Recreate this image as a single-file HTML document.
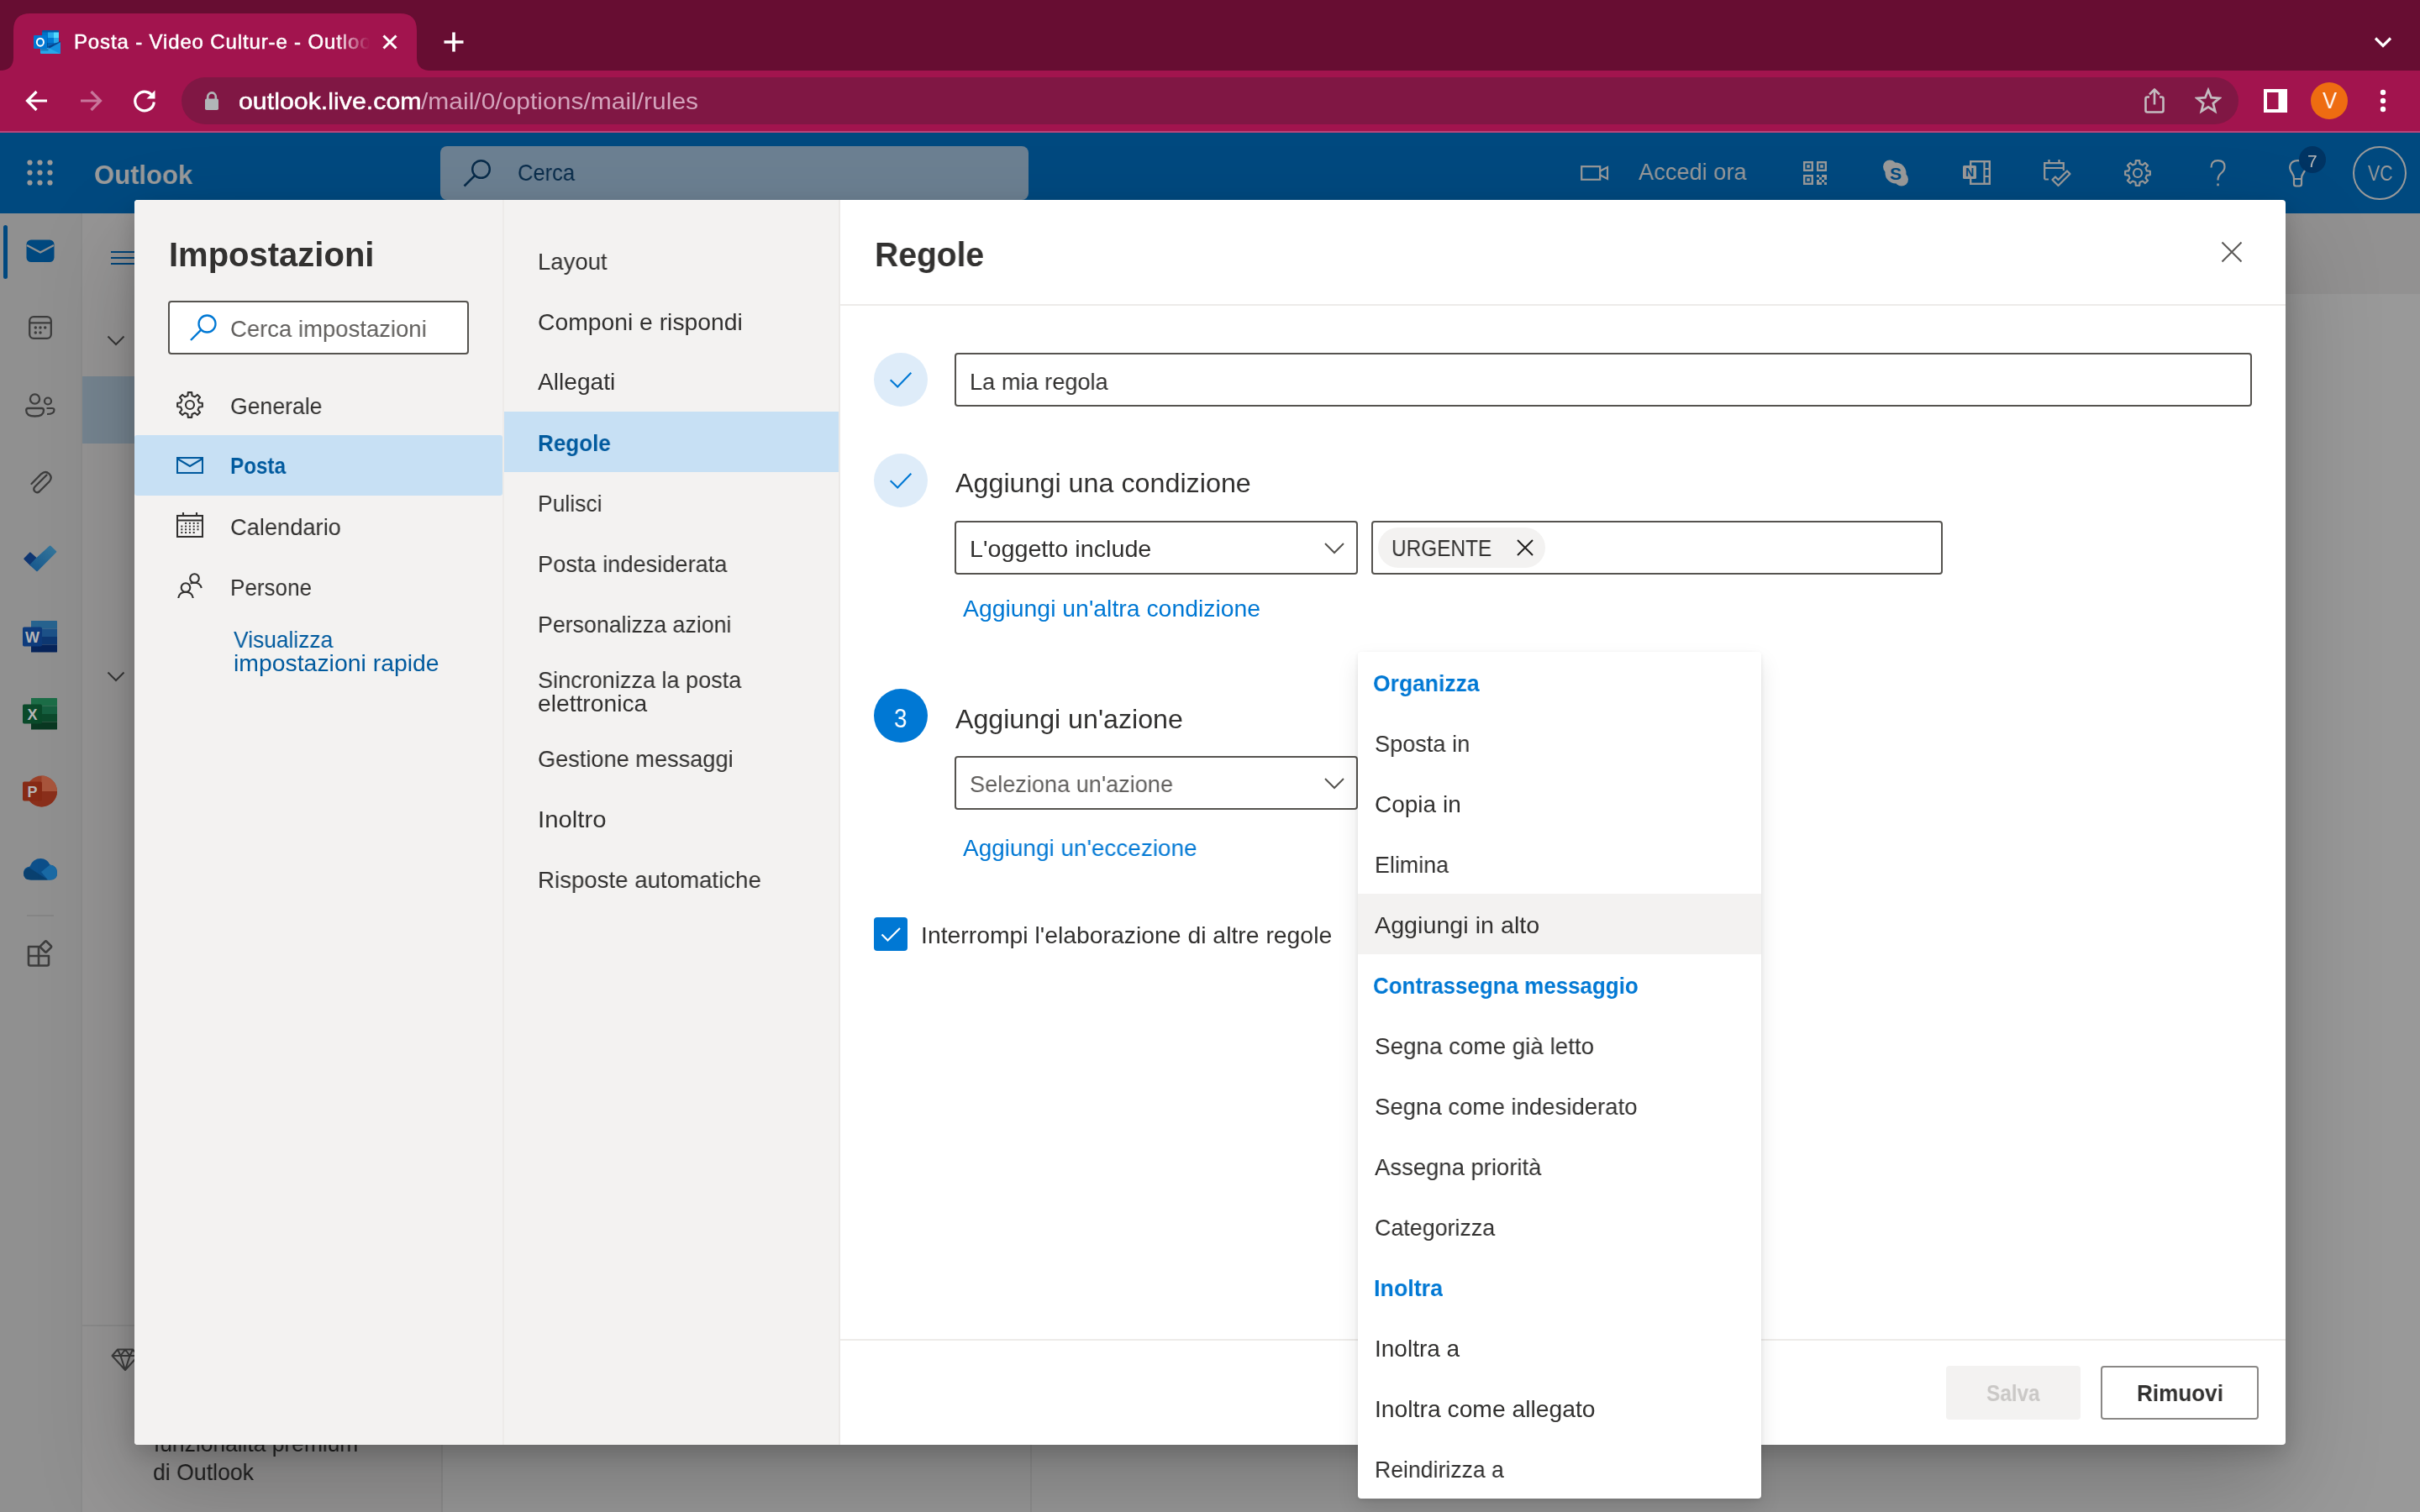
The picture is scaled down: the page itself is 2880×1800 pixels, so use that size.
<!DOCTYPE html>
<html lang="it"><head><meta charset="utf-8"><title>Posta - Video Cultur-e - Outlook</title>
<style>
html,body{margin:0;padding:0;}
body{width:2880px;height:1800px;overflow:hidden;position:relative;background:#989898;font-family:"Liberation Sans",sans-serif;}
.a{position:absolute;display:block;}
.t{position:absolute;white-space:nowrap;line-height:1;font-family:"Liberation Sans",sans-serif;will-change:transform;transform-origin:0 0;}
</style></head><body>
<div class="a" style="left:0px;top:0px;width:2880px;height:84px;background:#670d32;"></div>
<svg class="a" style="left:0px;top:0px;" width="520" height="84" viewBox="0 0 520 84"><path d="M0,84 Q16,84 16,68 L16,36 Q16,16 36,16 L476,16 Q496,16 496,36 L496,68 Q496,84 512,84 Z" fill="#a2144e"/></svg>
<svg class="a" style="left:40px;top:36px;" width="32" height="28" viewBox="0 0 32 28"><path d="M10.1,1 Q10.1,0 11.1,0 L29,0 Q30,0 30,1 L30,21 L10.1,21Z" fill="#0358a7"/><rect x="10.1" y="2.5" width="6.9" height="6.5" fill="#0072c6"/><rect x="17" y="2.5" width="7" height="6.5" fill="#28a8ea"/><rect x="24" y="2.5" width="6" height="6.5" fill="#50d9ff"/><rect x="10.1" y="9" width="6.9" height="6.3" fill="#0364b8"/><rect x="17" y="9" width="7" height="6.3" fill="#0078d4"/><rect x="24" y="9" width="6" height="6.3" fill="#28a8ea"/><rect x="10.1" y="15.3" width="6.9" height="5.7" fill="#064a8c"/><rect x="17" y="15.3" width="7" height="5.7" fill="#0364b8"/><rect x="24" y="15.3" width="6" height="5.7" fill="#0078d4"/><path d="M8,18.5 L18.5,21.4 L32,22 L32,28 L9,28 Q8,28 8,27Z" fill="#28a8ea"/><path d="M32,13.4 L32,28.05 L18.2,21.3Z" fill="#1490df"/><path d="M17.2,19.6 L31.5,13.1 L32,13.4 L32,14.2 L19.4,21.3Z" fill="#0a2767" opacity="0.6"/><rect x="8.5" y="22" width="9" height="2.5" fill="#0a5a9a" opacity="0.55"/><rect x="0" y="6" width="16.1" height="16" rx="1.2" fill="#0078d4"/><ellipse cx="7.9" cy="14.2" rx="4.05" ry="4.5" fill="none" stroke="#fff" stroke-width="1.95"/></svg>
<div class="t" style="left:88.00px;top:37.98px;font-size:24px;color:#fff;letter-spacing:0.860px;-webkit-text-stroke:0.5px #fff;width:356px;overflow:hidden;-webkit-mask-image:linear-gradient(to right,#000 0,#000 312px,transparent 352px);mask-image:linear-gradient(to right,#000 0,#000 312px,transparent 352px);">Posta - Video Cultur-e - Outlook</div>
<svg class="a" style="left:452px;top:38px;" width="24" height="24" viewBox="0 0 24 24"><path d="M4.5,4.5 L19.5,19.5 M19.5,4.5 L4.5,19.5" stroke="#fff" stroke-width="3" fill="none"/></svg>
<svg class="a" style="left:526px;top:36px;" width="28" height="28" viewBox="0 0 28 28"><path d="M14,2.5 L14,25.5 M2.5,14 L25.5,14" stroke="#fff" stroke-width="3.6" fill="none"/></svg>
<svg class="a" style="left:2822px;top:40px;" width="28" height="20" viewBox="0 0 28 20"><path d="M5,5.5 L14,14.5 L23,5.5" stroke="#fff" stroke-width="3.2" fill="none"/></svg>
<div class="a" style="left:0px;top:84px;width:2880px;height:72px;background:#a2144e;"></div>
<div class="a" style="left:0px;top:156px;width:2880px;height:2px;background:#b9457b;"></div>
<svg class="a" style="left:28px;top:104px;" width="32" height="32" viewBox="0 0 32 32"><path d="M28,16 L5,16 M15.5,5 L4.5,16 L15.5,27" stroke="#fff" stroke-width="3.2" fill="none" stroke-linejoin="miter"/></svg>
<svg class="a" style="left:92px;top:104px;" width="32" height="32" viewBox="0 0 32 32"><path d="M4,16 L27,16 M16.5,5 L27.5,16 L16.5,27" stroke="#c8769b" stroke-width="3.2" fill="none"/></svg>
<svg class="a" style="left:156px;top:104px;" width="32" height="32" viewBox="0 0 32 32"><path d="M26.2,11.5 A11.3,11.3 0 1 0 27.3,17.5" stroke="#fff" stroke-width="3.2" fill="none"/><path d="M28.5,3.5 L28.5,13.5 L18.5,13.5 Z" fill="#fff"/></svg>
<div class="a" style="left:216px;top:92px;width:2448px;height:56px;background:#801744;border-radius:28px;"></div>
<svg class="a" style="left:242px;top:108px;" width="20" height="26" viewBox="0 0 20 26"><path d="M5.2,10 L5.2,7.2 A4.8,4.8 0 0 1 14.8,7.2 L14.8,10" stroke="#b1b5b8" stroke-width="2.6" fill="none"/><rect x="2" y="9.5" width="16" height="13.5" rx="1.8" fill="#b1b5b8"/></svg>
<div class="t" style="left:284.42px;top:107.30px;font-size:28px;color:#fff;transform:scaleX(1.0835);-webkit-text-stroke:0.5px #fff;">outlook.live.com</div>
<div class="t" style="left:501.00px;top:107.30px;font-size:28px;color:#d3a3bb;transform:scaleX(1.0712);">/mail/0/options/mail/rules</div>
<svg class="a" style="left:2550px;top:102px;" width="28" height="36" viewBox="0 0 28 36"><path d="M8,13.5 L5.5,13.5 Q3.5,13.5 3.5,15.5 L3.5,29.5 Q3.5,31.5 5.5,31.5 L22.5,31.5 Q24.5,31.5 24.5,29.5 L24.5,15.5 Q24.5,13.5 22.5,13.5 L20,13.5 M14,22.5 L14,5 M8,10.5 L14,4.5 L20,10.5" stroke="#c4bcc0" stroke-width="2.6" fill="none" stroke-linejoin="round"/></svg>
<svg class="a" style="left:2612px;top:104px;" width="32" height="32" viewBox="0 0 32 32"><path d="M16,3.2 L19.6,12.2 L29.3,12.9 L21.8,19.1 L24.2,28.5 L16,23.3 L7.8,28.5 L10.2,19.1 L2.7,12.9 L12.4,12.2 Z" stroke="#c4bcc0" stroke-width="2.7" fill="none" stroke-linejoin="miter"/></svg>
<svg class="a" style="left:2694px;top:106px;" width="28" height="28" viewBox="0 0 28 28"><rect x="0" y="0" width="28" height="28" fill="#fff"/><rect x="4" y="4" width="13.5" height="20" fill="#a2144e"/></svg>
<div class="a" style="left:2750px;top:98px;width:44px;height:44px;background:#ee6c11;border-radius:50%;"></div>
<div class="t" style="left:2763.50px;top:107.44px;font-size:27px;color:#fff;transform:scaleX(0.9444);">V</div>
<svg class="a" style="left:2828px;top:104px;" width="16" height="32" viewBox="0 0 16 32"><circle cx="8" cy="6" r="3.2" fill="#fff"/><circle cx="8" cy="16" r="3.2" fill="#fff"/><circle cx="8" cy="26" r="3.2" fill="#fff"/></svg>
<div class="a" style="left:0px;top:158px;width:2880px;height:96px;background:#00497f;"></div>
<svg class="a" style="left:32px;top:190px;" width="31" height="31" viewBox="0 0 31 31"><circle cx="3.5" cy="3.5" r="3.1" fill="#9a9a9a"/><circle cx="3.5" cy="15.5" r="3.1" fill="#9a9a9a"/><circle cx="3.5" cy="27.5" r="3.1" fill="#9a9a9a"/><circle cx="15.5" cy="3.5" r="3.1" fill="#9a9a9a"/><circle cx="15.5" cy="15.5" r="3.1" fill="#9a9a9a"/><circle cx="15.5" cy="27.5" r="3.1" fill="#9a9a9a"/><circle cx="27.5" cy="3.5" r="3.1" fill="#9a9a9a"/><circle cx="27.5" cy="15.5" r="3.1" fill="#9a9a9a"/><circle cx="27.5" cy="27.5" r="3.1" fill="#9a9a9a"/></svg>
<div class="t" style="left:112.03px;top:192.21px;font-size:32px;color:#9a9a9a;transform:scaleX(0.9702);font-weight:700;">Outlook</div>
<div class="a" style="left:524px;top:174px;width:700px;height:64px;background:#6c8092;border-radius:8px;"></div>
<svg class="a" style="left:550px;top:188px;" width="36" height="36" viewBox="0 0 36 36"><circle cx="22.5" cy="13.5" r="10.3" stroke="#082b4a" stroke-width="2.4" fill="none"/><path d="M15.2,20.8 L2.5,33.5" stroke="#082b4a" stroke-width="2.6" fill="none"/></svg>
<div class="t" style="left:616.29px;top:192.40px;font-size:28px;color:#082b4a;transform:scaleX(0.9121);">Cerca</div>
<svg class="a" style="left:1880px;top:194px;" width="36" height="24" viewBox="0 0 36 24"><rect x="2.2" y="4.2" width="22" height="15.6" stroke="#9a9a9a" stroke-width="2.2" fill="none"/><path d="M24.5,9.5 L33,5 L33,19 L24.5,14.5" stroke="#9a9a9a" stroke-width="2.2" fill="none"/></svg>
<div class="t" style="left:1950.00px;top:191.30px;font-size:28px;color:#9a9a9a;transform:scaleX(0.9720);">Accedi ora</div>
<svg class="a" style="left:2146px;top:192px;" width="28" height="28" viewBox="0 0 28 28"><rect x="1.2" y="1.2" width="9.6" height="9.6" stroke="#9a9a9a" stroke-width="2.4" fill="none"/><rect x="4.2" y="4.2" width="3.6" height="3.6" fill="#9a9a9a"/><rect x="17.2" y="1.2" width="9.6" height="9.6" stroke="#9a9a9a" stroke-width="2.4" fill="none"/><rect x="20.2" y="4.2" width="3.6" height="3.6" fill="#9a9a9a"/><rect x="1.2" y="17.2" width="9.6" height="9.6" stroke="#9a9a9a" stroke-width="2.4" fill="none"/><rect x="4.2" y="20.2" width="3.6" height="3.6" fill="#9a9a9a"/><rect x="16" y="16" width="3" height="3" fill="#9a9a9a"/><rect x="22" y="16" width="3" height="3" fill="#9a9a9a"/><rect x="19" y="19" width="3" height="3" fill="#9a9a9a"/><rect x="25" y="19" width="3" height="3" fill="#9a9a9a"/><rect x="16" y="22" width="3" height="3" fill="#9a9a9a"/><rect x="22" y="22" width="3" height="3" fill="#9a9a9a"/><rect x="19" y="25" width="3" height="3" fill="#9a9a9a"/><rect x="25" y="25" width="3" height="3" fill="#9a9a9a"/><rect x="25" y="16" width="3" height="3" fill="#9a9a9a"/><rect x="16" y="25" width="3" height="3" fill="#9a9a9a"/></svg>
<svg class="a" style="left:2239px;top:189px;" width="34" height="34" viewBox="0 0 34 34"><circle cx="17" cy="17" r="12.5" fill="#9a9a9a"/><circle cx="10" cy="9.5" r="8" fill="#9a9a9a"/><circle cx="24" cy="24.5" r="8" fill="#9a9a9a"/><text x="17" y="24.6" font-family='"Liberation Sans", sans-serif' font-weight="700" font-size="21" text-anchor="middle" fill="#00497f">S</text></svg>
<svg class="a" style="left:2336px;top:191px;" width="34" height="30" viewBox="0 0 34 30"><rect x="9.2" y="1.2" width="22.6" height="26.6" stroke="#9a9a9a" stroke-width="2.4" fill="none"/><path d="M25.5,1 L25.5,28 M25.5,10 L32,10 M25.5,19 L32,19" stroke="#9a9a9a" stroke-width="2.2" fill="none"/><rect x="0" y="6" width="16" height="16" rx="1.5" fill="#9a9a9a"/><text x="8" y="19.2" font-family='"Liberation Sans", sans-serif' font-weight="700" font-size="14" text-anchor="middle" fill="#00497f">N</text></svg>
<svg class="a" style="left:2430px;top:189px;" width="36" height="34" viewBox="0 0 36 34"><path d="M3.2,24.5 L3.2,5.2 L25.8,5.2 L25.8,14 M3.2,11 L25.8,11 M8.5,1 L8.5,6 M20.5,1 L20.5,6 M3.2,24.5 L8,24.5" stroke="#9a9a9a" stroke-width="2.2" fill="none"/><path d="M12.5,25 L16,21.5 L19.5,25 L30,14.5 L33.5,18 L19.5,32 Z" stroke="#9a9a9a" stroke-width="2.2" fill="none" stroke-linejoin="round"/></svg>
<svg class="a" style="left:2528px;top:190px;" width="32" height="32" viewBox="0 0 32 32"><path d="M30.83,13.77 L30.83,18.23 L26.91,18.53 L25.50,21.93 L28.07,24.91 L24.91,28.07 L21.93,25.50 L18.53,26.91 L18.23,30.83 L13.77,30.83 L13.47,26.91 L10.07,25.50 L7.09,28.07 L3.93,24.91 L6.50,21.93 L5.09,18.53 L1.17,18.23 L1.17,13.77 L5.09,13.47 L6.50,10.07 L3.93,7.09 L7.09,3.93 L10.07,6.50 L13.47,5.09 L13.77,1.17 L18.23,1.17 L18.53,5.09 L21.93,6.50 L24.91,3.93 L28.07,7.09 L25.50,10.07 L26.91,13.47Z" stroke="#9a9a9a" stroke-width="2.2" fill="none" stroke-linejoin="round"/><circle cx="16" cy="16" r="5" stroke="#9a9a9a" stroke-width="2.2" fill="none"/></svg>
<svg class="a" style="left:2628px;top:189px;" width="24" height="34" viewBox="0 0 24 34"><path d="M3.5,10.5 Q3.5,2.2 11.5,2.2 Q19.5,2.2 19.5,9.5 Q19.5,14 15,17.5 Q11.5,20.5 11.5,25.5" stroke="#9a9a9a" stroke-width="2.2" fill="none"/><rect x="10.3" y="29.5" width="2.5" height="2.8" fill="#9a9a9a"/></svg>
<svg class="a" style="left:2722px;top:189px;" width="26" height="34" viewBox="0 0 26 34"><path d="M8,24 Q8,20 5.5,16.5 Q2.2,12 3.6,7.5 Q5.5,2.2 12.5,2.2 Q19.5,2.2 21.4,7.5 Q22.8,12 19.5,16.5 Q17,20 17,24 Z M8,24 L8,30 Q8,32.5 10.5,32.5 L14.5,32.5 Q17,32.5 17,30 L17,24" stroke="#9a9a9a" stroke-width="2.2" fill="none"/></svg>
<div class="a" style="left:2736px;top:174px;width:32px;height:32px;background:#003463;border-radius:50%;"></div>
<div class="t" style="left:2745.95px;top:181.87px;font-size:20px;color:#b8b8b8;transform:scaleX(1.0500);">7</div>
<div class="a" style="left:2800px;top:174px;width:64px;height:64px;border:2px solid #9a9a9a;border-radius:50%;box-sizing:border-box;"></div>
<div class="t" style="left:2817.50px;top:193.84px;font-size:25px;color:#9a9a9a;transform:scaleX(0.8508);">VC</div>
<div class="a" style="left:0px;top:254px;width:96px;height:1546px;background:#909090;"></div>
<div class="a" style="left:96px;top:254px;width:1.5px;height:1546px;background:#8c8c8c;"></div>
<div class="a" style="left:98px;top:254px;width:427px;height:1546px;background:#969595;"></div>
<div class="a" style="left:525px;top:254px;width:2px;height:1546px;background:#8d8d8d;"></div>
<div class="a" style="left:527px;top:254px;width:2353px;height:1546px;background:#999999;"></div>
<div class="a" style="left:527px;top:254px;width:2353px;height:96px;background:#929191;"></div>
<div class="a" style="left:1226px;top:350px;width:2px;height:1450px;background:#8f8f8f;"></div>
<div class="a" style="left:98px;top:1577px;width:427px;height:2px;background:#8b8b8b;"></div>
<div class="a" style="left:4px;top:268px;width:4.5px;height:64px;background:#00487f;border-radius:3px;"></div>
<svg class="a" style="left:31px;top:285px;" width="34" height="28" viewBox="0 0 34 28"><rect x="0.5" y="0.5" width="33" height="26.5" rx="5.5" fill="#00487f"/><path d="M1,7 L17,15.5 L33,7" stroke="#909090" stroke-width="2.4" fill="none"/></svg>
<svg class="a" style="left:34px;top:376px;" width="28" height="28" viewBox="0 0 28 28"><rect x="1.2" y="1.2" width="25.6" height="25.6" rx="4.8" stroke="#3d3d3d" stroke-width="2.3" fill="none"/><path d="M1.2,8.4 L26.8,8.4" stroke="#3d3d3d" stroke-width="2.2"/><circle cx="8.3" cy="14" r="1.75" fill="#3d3d3d"/><circle cx="14" cy="14" r="1.75" fill="#3d3d3d"/><circle cx="19.7" cy="14" r="1.75" fill="#3d3d3d"/><circle cx="8.3" cy="20" r="1.75" fill="#3d3d3d"/><circle cx="14" cy="20" r="1.75" fill="#3d3d3d"/></svg>
<svg class="a" style="left:30px;top:468px;" width="36" height="30" viewBox="0 0 36 30"><circle cx="11.5" cy="7" r="5.6" stroke="#3d3d3d" stroke-width="2.3" fill="none"/><path d="M3.5,18 L19.5,18 Q22,18 22,20.5 Q22,27.5 11.5,27.5 Q1.2,27.5 1.2,20.5 Q1.2,18 3.5,18Z" stroke="#3d3d3d" stroke-width="2.3" fill="none"/><circle cx="27" cy="9.5" r="4" stroke="#3d3d3d" stroke-width="2.2" fill="none"/><path d="M25.5,18 L32,18 Q34.5,18 34.5,20 Q34.5,25 26,25" stroke="#3d3d3d" stroke-width="2.2" fill="none"/></svg>
<svg class="a" style="left:33px;top:558px;" width="30" height="32" viewBox="0 0 30 32"><path d="M22.5,7.5 L8.5,21.5 Q6,24.5 8.5,27 Q11,29.5 14,27 L25.5,15.5 Q30,10.5 25.5,6 Q21,1.8 16,6.3 L4.5,18" stroke="#3d3d3d" stroke-width="2.3" fill="none" stroke-linecap="round"/></svg>
<svg class="a" style="left:27px;top:648px;" width="42" height="34" viewBox="0 0 42 34"><defs><linearGradient id="tg" x1="0" y1="1" x2="1" y2="0"><stop offset="0" stop-color="#15568c"/><stop offset="1" stop-color="#37789c"/></linearGradient></defs><path d="M2.3,17.2 L8.9,10.4 L16.5,17.2 L9.6,24.5 Z" fill="#0f3672" stroke="#0f3672" stroke-width="2" stroke-linejoin="round"/><path d="M16.5,17.2 L32.6,2.6 L39.3,8.8 L17,31.3 L9.6,24.5 Z" fill="url(#tg)" stroke="url(#tg)" stroke-width="2" stroke-linejoin="round"/></svg>
<svg class="a" style="left:27px;top:739px;border-radius:2px;" width="42" height="38" viewBox="0 0 42 38"><rect x="10" y="0" width="31" height="9.5" fill="#27638f"/><rect x="10" y="9.5" width="31" height="9.5" fill="#1d5288"/><rect x="10" y="19" width="31" height="9.5" fill="#0e3872"/><rect x="10" y="28.5" width="31" height="9" fill="#07245a"/><rect x="0" y="7.5" width="23" height="23" rx="1.8" fill="#0e3b7c"/><text x="11.5" y="26" font-family='"Liberation Sans", sans-serif' font-weight="700" font-size="18" text-anchor="middle" fill="#b5b5b5">W</text></svg>
<svg class="a" style="left:27px;top:831px;border-radius:2px;" width="42" height="38" viewBox="0 0 42 38"><rect x="10" y="0" width="31" height="9.5" fill="#1c6d47"/><rect x="10" y="9.5" width="31" height="9.5" fill="#166040"/><rect x="10" y="19" width="31" height="9.5" fill="#0c4a2c"/><rect x="10" y="28.5" width="31" height="9" fill="#0a3822"/><rect x="0" y="7.5" width="23" height="23" rx="1.8" fill="#0a4a2a"/><text x="11.5" y="26" font-family='"Liberation Sans", sans-serif' font-weight="700" font-size="18" text-anchor="middle" fill="#b5b5b5">X</text></svg>
<svg class="a" style="left:27px;top:923px;" width="42" height="38" viewBox="0 0 42 38"><circle cx="22.5" cy="19" r="18.5" fill="#9a4028"/><path d="M22.5,0.5 A18.5,18.5 0 0 1 41,19 L22.5,19Z" fill="#a8553c"/><path d="M4,19 L41,19 A18.5,18.5 0 0 1 4,19Z" fill="#8a2f1b"/><rect x="0" y="7.5" width="23" height="23" rx="1.8" fill="#872a15"/><text x="11.5" y="26" font-family='"Liberation Sans", sans-serif' font-weight="700" font-size="18" text-anchor="middle" fill="#b5b5b5">P</text></svg>
<svg class="a" style="left:27px;top:1021px;" width="42" height="28" viewBox="0 0 42 28"><path d="M10,26.5 Q1,26.5 1,18.5 Q1,11.5 8.5,10.5 Q12,1 21.5,1 Q29,1 32.5,8.5 Q41,9.5 41,18 Q41,26.5 33,26.5Z" fill="#0c4f8a"/><path d="M8,12 L30,26.5 L10,26.5 Q1,26.5 1,18.5 Q1.5,13 8,12Z" fill="#09406f"/><path d="M22,17 L32.5,8.5 Q41,9.5 41,18 Q41,26.5 33,26.5 L30,26.5Z" fill="#1a6aa5"/></svg>
<div class="a" style="left:32px;top:1089px;width:32px;height:2px;background:#858585;"></div>
<svg class="a" style="left:32px;top:1119px;" width="33" height="33" viewBox="0 0 33 33"><path d="M2,8 L14,8 L14,30.5 L4,30.5 Q2,30.5 2,28.5Z M2,19 L26,19 L26,28.5 Q26,30.5 24,30.5 L14,30.5" stroke="#3d3d3d" stroke-width="2.6" fill="none" stroke-linejoin="round"/><rect x="17.5" y="3" width="10" height="10" rx="1.5" transform="rotate(45 22.5 8)" stroke="#3d3d3d" stroke-width="2.6" fill="none"/></svg>
<div class="a" style="left:98px;top:448px;width:427px;height:80px;background:#768591;"></div>
<div class="a" style="left:132px;top:299px;width:40px;height:2.2px;background:#00457a;"></div>
<div class="a" style="left:132px;top:306px;width:40px;height:2.2px;background:#00457a;"></div>
<div class="a" style="left:132px;top:313px;width:40px;height:2.2px;background:#00457a;"></div>
<svg class="a" style="left:126px;top:398px;" width="24" height="16" viewBox="0 0 24 16"><path d="M2.5,2.5 L12,12 L21.5,2.5" stroke="#363636" stroke-width="2" fill="none"/></svg>
<svg class="a" style="left:126px;top:798px;" width="24" height="16" viewBox="0 0 24 16"><path d="M2.5,2.5 L12,12 L21.5,2.5" stroke="#363636" stroke-width="2" fill="none"/></svg>
<svg class="a" style="left:132px;top:1605px;" width="36" height="28" viewBox="0 0 36 28"><path d="M8,1.5 L26,1.5 L32.5,9 L17,26 L1.5,9 Z M1.5,9 L32.5,9 M8,1.5 L11.5,9 L17,26 L22.5,9 L26,1.5 M11.5,9 L17,1.5 L22.5,9" stroke="#3d3d3d" stroke-width="2" fill="none" stroke-linejoin="round"/></svg>
<div class="t" style="left:183.00px;top:1705.40px;font-size:28px;color:#1f1f1f;transform:scaleX(0.9416);">funzionalità premium</div>
<div class="t" style="left:182.05px;top:1739.40px;font-size:28px;color:#1f1f1f;transform:scaleX(0.9519);">di Outlook</div>
<div class="a" style="left:160px;top:238px;width:2560px;height:1482px;background:#fff;border-radius:4px;box-shadow:0 51px 115px rgba(0,0,0,.22),0 10px 29px rgba(0,0,0,.18);"></div>
<div class="a" style="left:160px;top:238px;width:438px;height:1482px;background:#f3f2f1;border-radius:4px 0 0 4px;"></div>
<div class="a" style="left:598px;top:238px;width:2px;height:1482px;background:#edebe9;"></div>
<div class="a" style="left:600px;top:238px;width:398px;height:1482px;background:#f3f2f1;"></div>
<div class="a" style="left:998px;top:238px;width:2px;height:1482px;background:#ebe9e7;"></div>
<div class="t" style="left:201.30px;top:282.64px;font-size:40px;color:#323130;font-weight:700;">Impostazioni</div>
<div class="a" style="left:200px;top:358px;width:358px;height:64px;background:#fff;border:2px solid #55534f;border-radius:4px;box-sizing:border-box;"></div>
<svg class="a" style="left:226px;top:374px;" width="32" height="32" viewBox="0 0 32 32"><circle cx="20.5" cy="11.5" r="10" stroke="#0078d4" stroke-width="2.3" fill="none"/><path d="M13.3,18.7 L1,31" stroke="#0078d4" stroke-width="2.4" fill="none"/></svg>
<div class="t" style="left:274.02px;top:377.80px;font-size:28px;color:#605e5c;transform:scaleX(0.9815);">Cerca impostazioni</div>
<svg class="a" style="left:210px;top:466px;" width="32" height="32" viewBox="0 0 32 32"><path d="M30.83,13.77 L30.83,18.23 L26.91,18.53 L25.50,21.93 L28.07,24.91 L24.91,28.07 L21.93,25.50 L18.53,26.91 L18.23,30.83 L13.77,30.83 L13.47,26.91 L10.07,25.50 L7.09,28.07 L3.93,24.91 L6.50,21.93 L5.09,18.53 L1.17,18.23 L1.17,13.77 L5.09,13.47 L6.50,10.07 L3.93,7.09 L7.09,3.93 L10.07,6.50 L13.47,5.09 L13.77,1.17 L18.23,1.17 L18.53,5.09 L21.93,6.50 L24.91,3.93 L28.07,7.09 L25.50,10.07 L26.91,13.47Z" stroke="#323130" stroke-width="2.1" fill="none" stroke-linejoin="round"/><circle cx="16" cy="16" r="5" stroke="#323130" stroke-width="2.1" fill="none"/></svg>
<div class="t" style="left:274.05px;top:470.40px;font-size:28px;color:#323130;transform:scaleX(0.9506);">Generale</div>
<div class="a" style="left:160px;top:518px;width:438px;height:72px;background:#c7e0f4;border-radius:3px;"></div>
<svg class="a" style="left:210px;top:544px;" width="32" height="20" viewBox="0 0 32 20"><rect x="1" y="1" width="30" height="18" stroke="#005a9e" stroke-width="2.1" fill="none"/><path d="M1,2 L16,11 L31,2" stroke="#005a9e" stroke-width="2.1" fill="none"/></svg>
<div class="t" style="left:274.13px;top:541.00px;font-size:28px;color:#005a9e;transform:scaleX(0.8655);font-weight:700;">Posta</div>
<svg class="a" style="left:210px;top:610px;" width="32" height="30" viewBox="0 0 32 30"><rect x="1" y="4" width="30" height="25" stroke="#323130" stroke-width="2.1" fill="none"/><path d="M1,9.5 L31,9.5 M8,0 L8,5 M24,0 L24,5" stroke="#323130" stroke-width="2.1" fill="none"/><rect x="5.3" y="15.600000000000001" width="2" height="2" fill="#323130"/><rect x="5.3" y="19.3" width="2" height="2" fill="#323130"/><rect x="5.3" y="23" width="2" height="2" fill="#323130"/><rect x="10.1" y="11.9" width="2" height="2" fill="#323130"/><rect x="10.1" y="15.600000000000001" width="2" height="2" fill="#323130"/><rect x="10.1" y="19.3" width="2" height="2" fill="#323130"/><rect x="10.1" y="23" width="2" height="2" fill="#323130"/><rect x="14.9" y="11.9" width="2" height="2" fill="#323130"/><rect x="14.9" y="15.600000000000001" width="2" height="2" fill="#323130"/><rect x="14.9" y="19.3" width="2" height="2" fill="#323130"/><rect x="14.9" y="23" width="2" height="2" fill="#323130"/><rect x="19.7" y="11.9" width="2" height="2" fill="#323130"/><rect x="19.7" y="15.600000000000001" width="2" height="2" fill="#323130"/><rect x="19.7" y="19.3" width="2" height="2" fill="#323130"/><rect x="19.7" y="23" width="2" height="2" fill="#323130"/><rect x="24.5" y="11.9" width="2" height="2" fill="#323130"/><rect x="24.5" y="15.600000000000001" width="2" height="2" fill="#323130"/><rect x="24.5" y="19.3" width="2" height="2" fill="#323130"/></svg>
<div class="t" style="left:273.63px;top:613.50px;font-size:28px;color:#323130;transform:scaleX(0.9735);">Calendario</div>
<svg class="a" style="left:211px;top:682px;" width="30" height="30" viewBox="0 0 30 30"><circle cx="20.5" cy="6.5" r="5.3" stroke="#323130" stroke-width="2.1" fill="none"/><circle cx="10" cy="17.5" r="5.3" stroke="#323130" stroke-width="2.1" fill="none"/><path d="M1.2,30 Q2.5,22.8 10,22.8 Q17.5,22.8 18.8,30 M15.5,12.5 Q18,11.8 20.5,11.8 Q27,11.8 28.8,18" stroke="#323130" stroke-width="2.1" fill="none"/></svg>
<div class="t" style="left:274.34px;top:685.50px;font-size:28px;color:#323130;transform:scaleX(0.9300);">Persone</div>
<div class="t" style="left:278.20px;top:748.10px;font-size:28px;color:#005a9e;transform:scaleX(0.9414);">Visualizza</div>
<div class="t" style="left:277.79px;top:776.10px;font-size:28px;color:#005a9e;transform:scaleX(1.0139);">impostazioni rapide</div>
<div class="a" style="left:600px;top:490px;width:398px;height:72px;background:#c7e0f4;"></div>
<div class="t" style="left:640.37px;top:513.70px;font-size:28px;color:#005a9e;transform:scaleX(0.9294);font-weight:700;">Regole</div>
<div class="t" style="left:640.44px;top:298.40px;font-size:28px;color:#323130;transform:scaleX(0.9819);">Layout</div>
<div class="t" style="left:639.89px;top:369.60px;font-size:28px;color:#323130;transform:scaleX(1.0104);">Componi e rispondi</div>
<div class="t" style="left:640.00px;top:441.40px;font-size:28px;color:#323130;transform:scaleX(1.0043);">Allegati</div>
<div class="t" style="left:640.11px;top:586.10px;font-size:28px;color:#323130;transform:scaleX(0.9448);">Pulisci</div>
<div class="t" style="left:640.06px;top:657.60px;font-size:28px;color:#323130;transform:scaleX(0.9720);">Posta indesiderata</div>
<div class="t" style="left:640.09px;top:729.50px;font-size:28px;color:#323130;transform:scaleX(0.9550);">Personalizza azioni</div>
<div class="t" style="left:639.93px;top:795.60px;font-size:28px;color:#323130;transform:scaleX(0.9668);">Sincronizza la posta</div>
<div class="t" style="left:639.89px;top:824.10px;font-size:28px;color:#323130;transform:scaleX(1.0084);">elettronica</div>
<div class="t" style="left:639.93px;top:890.00px;font-size:28px;color:#323130;transform:scaleX(0.9703);">Gestione messaggi</div>
<div class="t" style="left:639.91px;top:962.40px;font-size:28px;color:#323130;transform:scaleX(1.0472);">Inoltro</div>
<div class="t" style="left:640.03px;top:1033.60px;font-size:28px;color:#323130;transform:scaleX(0.9873);">Risposte automatiche</div>
<div class="t" style="left:1040.75px;top:282.84px;font-size:40px;color:#323130;transform:scaleX(0.9761);font-weight:700;">Regole</div>
<svg class="a" style="left:2642px;top:286px;" width="28" height="28" viewBox="0 0 28 28"><path d="M2.5,2.5 L25.5,25.5 M25.5,2.5 L2.5,25.5" stroke="#5c5a58" stroke-width="2.1" fill="none"/></svg>
<div class="a" style="left:1000px;top:362px;width:1720px;height:2px;background:#edebe9;"></div>
<div class="a" style="left:1000px;top:1594px;width:1720px;height:2px;background:#edebe9;"></div>
<div class="a" style="left:1040px;top:420px;width:64px;height:64px;background:#deecf9;border-radius:50%;"></div>
<svg class="a" style="left:1058px;top:438px;" width="28" height="28" viewBox="0 0 28 28"><path d="M1.7,14.3 L10.2,22.6 L26.3,5.8" stroke="#0078d4" stroke-width="2.1" fill="none"/></svg>
<div class="a" style="left:1136px;top:420px;width:1544px;height:64px;background:#fff;border:2px solid #55534f;border-radius:4px;box-sizing:border-box;"></div>
<div class="t" style="left:1154.06px;top:440.60px;font-size:28px;color:#323130;transform:scaleX(0.9710);">La mia regola</div>
<div class="a" style="left:1040px;top:540px;width:64px;height:64px;background:#deecf9;border-radius:50%;"></div>
<svg class="a" style="left:1058px;top:558px;" width="28" height="28" viewBox="0 0 28 28"><path d="M1.7,14.3 L10.2,22.6 L26.3,5.8" stroke="#0078d4" stroke-width="2.1" fill="none"/></svg>
<div class="t" style="left:1137.00px;top:559.21px;font-size:32px;color:#323130;transform:scaleX(1.0088);">Aggiungi una condizione</div>
<div class="a" style="left:1136px;top:620px;width:480px;height:64px;background:#fff;border:2px solid #55534f;border-radius:4px;box-sizing:border-box;"></div>
<div class="t" style="left:1154.45px;top:639.60px;font-size:28px;color:#323130;transform:scaleX(1.0260);">L'oggetto include</div>
<svg class="a" style="left:1575px;top:645px;" width="26" height="16" viewBox="0 0 26 16"><path d="M2,2 L13,13 L24,2" stroke="#55534f" stroke-width="2" fill="none"/></svg>
<div class="a" style="left:1632px;top:620px;width:680px;height:64px;background:#fff;border:2px solid #55534f;border-radius:4px;box-sizing:border-box;"></div>
<div class="a" style="left:1640px;top:628px;width:199px;height:48px;background:#f3f2f1;border-radius:24px;"></div>
<div class="t" style="left:1655.79px;top:640.04px;font-size:27px;color:#323130;transform:scaleX(0.9031);">URGENTE</div>
<svg class="a" style="left:1804px;top:641px;" width="22" height="22" viewBox="0 0 22 22"><path d="M2,2 L20,20 M20,2 L2,20" stroke="#201f1e" stroke-width="2" fill="none"/></svg>
<div class="t" style="left:1146.00px;top:711.10px;font-size:28px;color:#0078d4;transform:scaleX(1.0135);">Aggiungi un'altra condizione</div>
<div class="a" style="left:1040px;top:820px;width:64px;height:64px;background:#0078d4;border-radius:50%;"></div>
<div class="t" style="left:1064.14px;top:839.01px;font-size:32px;color:#fff;transform:scaleX(0.8625);">3</div>
<div class="t" style="left:1136.60px;top:839.71px;font-size:32px;color:#323130;transform:scaleX(1.0051);">Aggiungi un'azione</div>
<div class="a" style="left:1136px;top:900px;width:480px;height:64px;background:#fff;border:2px solid #55534f;border-radius:4px;box-sizing:border-box;"></div>
<div class="t" style="left:1154.03px;top:919.60px;font-size:28px;color:#605e5c;transform:scaleX(0.9690);">Seleziona un'azione</div>
<svg class="a" style="left:1575px;top:925px;" width="26" height="16" viewBox="0 0 26 16"><path d="M2,2 L13,13 L24,2" stroke="#55534f" stroke-width="2" fill="none"/></svg>
<div class="t" style="left:1146.00px;top:996.30px;font-size:28px;color:#0078d4;transform:scaleX(0.9973);">Aggiungi un'eccezione</div>
<div class="a" style="left:1040px;top:1092px;width:40px;height:40px;background:#0078d4;border-radius:4px;"></div>
<svg class="a" style="left:1047px;top:1099px;" width="26" height="26" viewBox="0 0 26 26"><path d="M2.5,13.5 L9.5,20.5 L24,6" stroke="#fff" stroke-width="2.2" fill="none"/></svg>
<div class="t" style="left:1095.97px;top:1099.80px;font-size:28px;color:#323130;transform:scaleX(1.0125);">Interrompi l'elaborazione di altre regole</div>
<div class="a" style="left:2316px;top:1626px;width:160px;height:64px;background:#f3f2f1;border-radius:4px;"></div>
<div class="t" style="left:2364.00px;top:1645.30px;font-size:28px;color:#cac8c6;transform:scaleX(0.8696);font-weight:700;">Salva</div>
<div class="a" style="left:2500px;top:1626px;width:188px;height:64px;background:#fff;border:2px solid #8a8886;border-radius:4px;box-sizing:border-box;"></div>
<div class="t" style="left:2543.07px;top:1645.30px;font-size:28px;color:#323130;transform:scaleX(0.9315);font-weight:700;">Rimuovi</div>
<div class="a" style="left:1616px;top:776px;width:480px;height:1008px;background:#fff;border-radius:4px;box-shadow:0 12px 26px rgba(0,0,0,.10),0 2px 6px rgba(0,0,0,.09);"></div>
<div class="a" style="left:1616px;top:1064px;width:480px;height:72px;background:#f3f2f1;"></div>
<div class="t" style="left:1634.05px;top:799.60px;font-size:28px;color:#0078d4;transform:scaleX(0.9457);font-weight:700;">Organizza</div>
<div class="t" style="left:1635.83px;top:872.30px;font-size:28px;color:#323130;transform:scaleX(0.9696);">Sposta in</div>
<div class="t" style="left:1635.80px;top:944.30px;font-size:28px;color:#323130;transform:scaleX(0.9984);">Copia in</div>
<div class="t" style="left:1635.88px;top:1016.30px;font-size:28px;color:#323130;transform:scaleX(0.9586);">Elimina</div>
<div class="t" style="left:1635.80px;top:1088.30px;font-size:28px;color:#323130;transform:scaleX(1.0251);">Aggiungi in alto</div>
<div class="t" style="left:1634.07px;top:1159.60px;font-size:28px;color:#0078d4;transform:scaleX(0.9262);font-weight:700;">Contrassegna messaggio</div>
<div class="t" style="left:1635.81px;top:1232.30px;font-size:28px;color:#323130;transform:scaleX(0.9924);">Segna come già letto</div>
<div class="t" style="left:1635.82px;top:1304.30px;font-size:28px;color:#323130;transform:scaleX(0.9843);">Segna come indesiderato</div>
<div class="t" style="left:1636.10px;top:1376.30px;font-size:28px;color:#323130;transform:scaleX(0.9805);">Assegna priorità</div>
<div class="t" style="left:1636.14px;top:1448.30px;font-size:28px;color:#323130;transform:scaleX(0.9588);">Categorizza</div>
<div class="t" style="left:1635.04px;top:1519.60px;font-size:28px;color:#0078d4;transform:scaleX(0.9590);font-weight:700;">Inoltra</div>
<div class="t" style="left:1635.81px;top:1592.30px;font-size:28px;color:#323130;transform:scaleX(0.9970);">Inoltra a</div>
<div class="t" style="left:1635.78px;top:1664.30px;font-size:28px;color:#323130;transform:scaleX(1.0103);">Inoltra come allegato</div>
<div class="t" style="left:1635.90px;top:1736.30px;font-size:28px;color:#323130;transform:scaleX(0.9502);">Reindirizza a</div>
</body></html>
